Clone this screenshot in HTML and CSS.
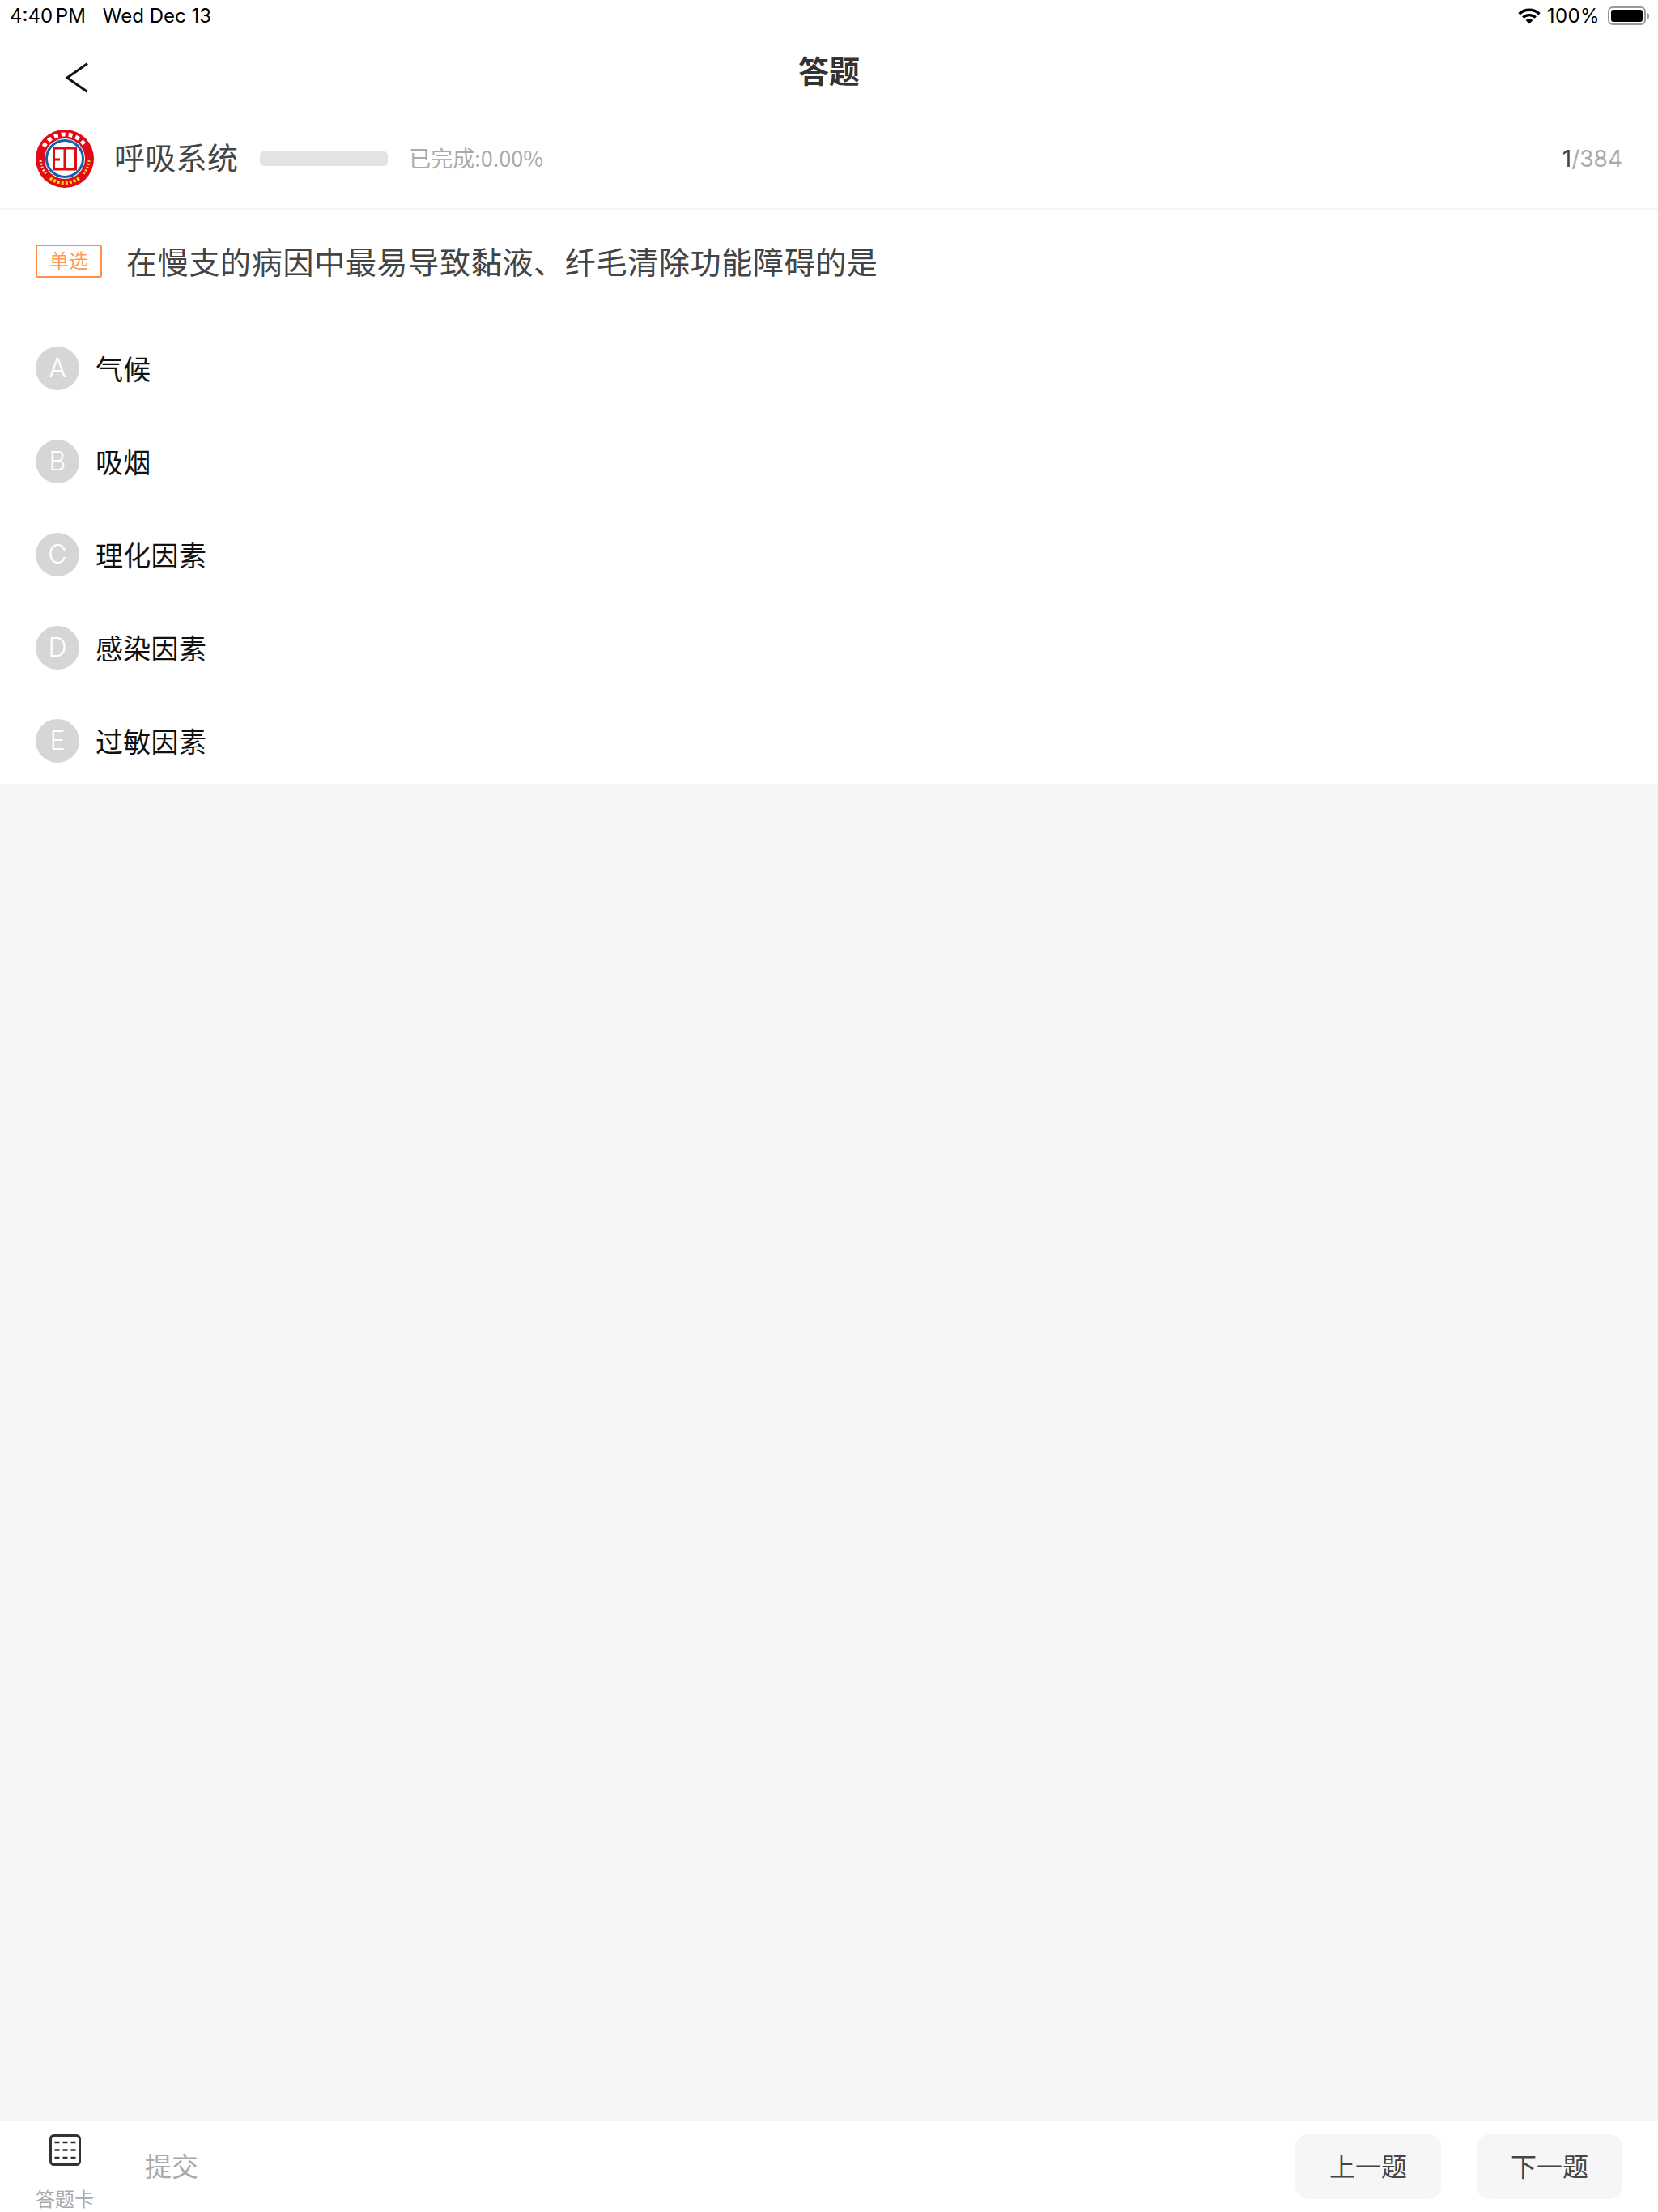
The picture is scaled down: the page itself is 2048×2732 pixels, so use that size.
FILE: index.html
```html
<!DOCTYPE html>
<html lang="zh-CN">
<head>
<meta charset="utf-8">
<title>答题</title>
<link rel="stylesheet" href="styles.css">
</head>
<body>
<div class="page">
  <div class="status">
    <div class="status-left"><span class="status-time">4:40 PM</span><span>Wed Dec 13</span></div>
    <div class="status-right">
      <svg class="wifi" viewBox="0 0 28 20" aria-hidden="true">
        <path d="M1.5 7.2C8.5 .6 19.5 .6 26.5 7.2" class="wifi-arc"/>
        <path d="M6.2 11.6C10.6 7.6 17.4 7.6 21.8 11.6" class="wifi-arc"/>
        <path d="M14 19.6l-4.4-4.7c2.5-2 6.3-2 8.8 0z" class="wifi-dot"/>
      </svg>
      <span class="pct">100%</span>
      <div class="battery"><div class="battery-fill"></div></div>
      <div class="battery-nub"></div>
    </div>
  </div>

  <header class="nav">
    <svg class="back" viewBox="0 0 28 38" aria-hidden="true"><path d="M27 1.5L2 19l25 17.5"/></svg>
    <h1 class="nav-title">答题</h1>
    <div class="nav-spacer"></div>
  </header>

  <section class="course">
    <svg class="logo" viewBox="0 0 72 72" aria-hidden="true">
      <circle cx="36" cy="36" r="36" fill="#e20a17"/>
      <path class="logo-top" d="M10 21A30 30 0 0 1 62 21"/>
      <path class="logo-left" d="M6 38A30 30 0 0 0 14 56"/>
      <path class="logo-right" d="M66 38A30 30 0 0 1 58 56"/>
      <path class="logo-bottom" d="M18 60A30 30 0 0 0 54 60"/>
      <circle cx="36" cy="36" r="25" fill="#fff"/>
      <circle cx="36" cy="36" r="22.500" fill="#fff" stroke="#0f62ab" stroke-width="3"/>
      <path class="logo-mark" d="M22.500 23H49.500V49H22.500ZM36 23V49M22.500 37H30"/>
    </svg>
    <div class="course-name">呼吸系统</div>
    <div class="bar"></div>
    <div class="done">已完成:0.00%</div>
    <div class="count"><span class="count-now">1</span>/384</div>
  </section>

  <main class="quiz">
    <div class="question">
      <span class="tag">单选</span>
      <p class="question-text">在慢支的病因中最易导致黏液、纤毛清除功能障碍的是</p>
    </div>
    <ul class="options">
      <li class="option"><span class="letter">A</span><span class="option-text">气候</span></li>
      <li class="option"><span class="letter">B</span><span class="option-text">吸烟</span></li>
      <li class="option"><span class="letter">C</span><span class="option-text">理化因素</span></li>
      <li class="option"><span class="letter">D</span><span class="option-text">感染因素</span></li>
      <li class="option"><span class="letter">E</span><span class="option-text">过敏因素</span></li>
    </ul>
  </main>

  <div class="filler"></div>

  <footer class="toolbar">
    <div class="card">
      <svg class="card-icon" viewBox="0 0 39 39" aria-hidden="true">
        <rect x="1.500" y="1.500" width="36" height="36" rx="4" class="card-box"/>
        <path d="M6.500 10h6M16.500 10h6M26.500 10h6M6.500 19.500h6M16.500 19.500h6M26.500 19.500h6M6.500 29h6M16.500 29h6M26.500 29h6" class="card-lines"/>
      </svg>
      <span class="card-label">答题卡</span>
    </div>
    <div class="submit">提交</div>
    <div class="buttons">
      <button class="btn">上一题</button>
      <button class="btn">下一题</button>
    </div>
  </footer>
</div>
</body>
</html>
```
FILE: styles.css
```css
* { box-sizing: border-box; }
html, body { margin: 0; padding: 0; }
body {
  width: 2048px;
  height: 2732px;
  overflow: hidden;
  background: #fff;
  font-family: "Noto Sans CJK SC", "Noto Sans", sans-serif;
}
.page {
  width: 2048px;
  height: 2732px;
  display: flex;
  flex-direction: column;
  overflow: hidden;
}

/* status bar */
.status {
  height: 38px;
  flex: none;
  display: flex;
  justify-content: space-between;
  align-items: center;
  padding: 1px 11px 0 12px;
  font-family: Inter, "Liberation Sans", sans-serif;
  font-size: 24px;
  line-height: 38px;
  color: #000;
}
.status-left { display: flex; gap: 21px; }
.status-time { word-spacing: -3px; }
.status-right { display: flex; align-items: center; }
.wifi { width: 28px; height: 20px; margin-right: 8px; }
.wifi-arc { fill: none; stroke: #000; stroke-width: 3.400; }
.wifi-dot { fill: #000; }
.pct { margin-right: 10px; letter-spacing: .4px; }
.battery {
  width: 47px;
  height: 23px;
  border: 2px solid #9a9a9a;
  border-radius: 6px;
  padding: 2px;
}
.battery-fill { width: 100%; height: 100%; background: #000; border-radius: 3px; }
.battery-nub {
  width: 3px;
  height: 8px;
  margin-left: 1px;
  background: #9a9a9a;
  border-radius: 0 3px 3px 0;
}

/* nav */
.nav {
  height: 102px;
  flex: none;
  display: grid;
  grid-template-columns: 1fr auto 1fr;
  align-items: start;
}
.back {
  width: 28px;
  height: 38px;
  margin: 39px 0 0 81px;
  overflow: visible;
}
.back path { fill: none; stroke: #111; stroke-width: 3; }
.nav-title {
  margin: 21px 0 0;
  font-size: 38px;
  line-height: 54px;
  font-weight: 700;
  color: #333;
}

/* course row */
.course {
  height: 119px;
  flex: none;
  display: flex;
  align-items: center;
  padding: 0 44px 5px;
  border-bottom: 2px solid #f5f5f5;
}
.logo { width: 72px; height: 72px; flex: none; margin-right: 25px; }
.logo-top { fill: none; stroke: #fff; stroke-width: 5; stroke-dasharray: 5 4; }
.logo-left { fill: none; stroke: #ffd9c8; stroke-width: 3; stroke-dasharray: 2 2; }
.logo-right { fill: none; stroke: #ffe100; stroke-width: 3; stroke-dasharray: 2 2; }
.logo-bottom { fill: none; stroke: #ffe100; stroke-width: 4; stroke-dasharray: 3 2; }
.logo-mark { fill: none; stroke: #e20a17; stroke-width: 3; }
.course-name {
  font-size: 38px;
  line-height: 54px;
  letter-spacing: .3px;
  color: #444;
  margin: 0 27px 6px 0;
}
.bar {
  width: 158px;
  height: 18px;
  border-radius: 5px;
  background: #e2e3e4;
  margin-right: 26px;
}
.done {
  font-size: 27px;
  line-height: 40px;
  color: #aaa;
  margin-bottom: 3px;
}
.count {
  margin-left: auto;
  font-family: Inter, "Liberation Sans", sans-serif;
  font-size: 28px;
  line-height: 40px;
  color: #aaa;
}
.count-now { color: #444; }

/* question */
.quiz { flex: none; padding: 43px 0 26px; }
.question {
  display: flex;
  align-items: flex-start;
  padding: 0 44px;
}
.tag {
  width: 82px;
  height: 41px;
  flex: none;
  border: 2px solid #ff8e46;
  border-radius: 3px;
  color: #ff9a56;
  font-size: 24px;
  line-height: 34px;
  text-align: center;
  margin-right: 30px;
}
.question-text {
  margin: 0;
  font-size: 38px;
  line-height: 39px;
  letter-spacing: .7px;
  color: #444;
}
.options {
  list-style: none;
  margin: 85px 0 0;
  padding: 0 44px;
  display: flex;
  flex-direction: column;
  gap: 61px;
}
.option { display: flex; align-items: center; height: 54px; }
.letter {
  width: 54px;
  height: 54px;
  flex: none;
  border-radius: 50%;
  background: #d6d6d6;
  color: #fff;
  font-family: Inter, "Liberation Sans", sans-serif;
  font-size: 32px;
  font-weight: 300;
  line-height: 54px;
  text-align: center;
  margin-right: 20px;
}
.option-text {
  font-size: 34px;
  line-height: 52px;
  letter-spacing: .3px;
  color: #111;
}

.filler { flex: 1; background: #f5f5f5; }

/* toolbar */
.toolbar {
  height: 112px;
  flex: none;
  display: flex;
  align-items: flex-start;
  padding: 0 44px;
  background: #fff;
}
.card {
  width: 72px;
  display: flex;
  flex-direction: column;
  align-items: center;
  padding-top: 16px;
  margin-right: 63px;
}
.card-icon { width: 39px; height: 39px; }
.card-box { fill: none; stroke: #333; stroke-width: 3; }
.card-lines { fill: none; stroke: #333; stroke-width: 2.600; }
.card-label {
  margin-top: 24px;
  font-size: 24px;
  line-height: 32px;
  color: #aaa;
  white-space: nowrap;
}
.submit {
  margin-top: 30px;
  font-size: 33px;
  line-height: 48px;
  color: #aaa;
}
.buttons {
  margin-left: auto;
  margin-top: 16px;
  display: flex;
  gap: 44px;
}
.btn {
  width: 180px;
  height: 80px;
  border: 0;
  padding: 0 0 3px;
  border-radius: 16px;
  background: #f6f6f6;
  color: #444;
  font-family: inherit;
  font-size: 32px;
  line-height: 77px;
}
```
